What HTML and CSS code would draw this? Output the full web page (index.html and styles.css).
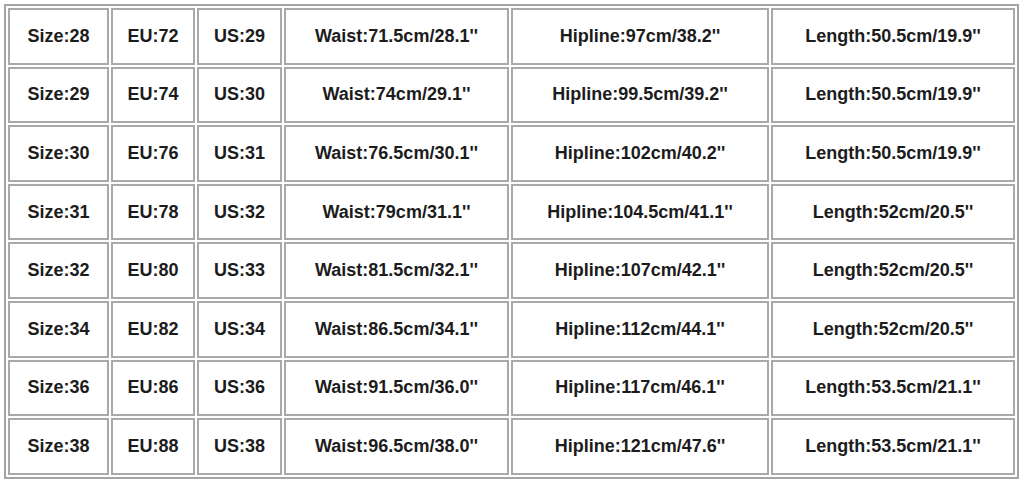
FILE: index.html
```html
<!DOCTYPE html>
<html>
<head>
<meta charset="utf-8">
<link rel="stylesheet" href="styles.css">
</head>
<body>
<table class="size-chart">
<colgroup>
<col class="c1"><col class="c2"><col class="c3"><col class="c4"><col class="c5"><col class="c6">
</colgroup>
<tbody>
<tr><td>Size:28</td><td>EU:72</td><td>US:29</td><td>Waist:71.5cm/28.1''</td><td>Hipline:97cm/38.2''</td><td>Length:50.5cm/19.9''</td></tr>
<tr><td>Size:29</td><td>EU:74</td><td>US:30</td><td>Waist:74cm/29.1''</td><td>Hipline:99.5cm/39.2''</td><td>Length:50.5cm/19.9''</td></tr>
<tr><td>Size:30</td><td>EU:76</td><td>US:31</td><td>Waist:76.5cm/30.1''</td><td>Hipline:102cm/40.2''</td><td>Length:50.5cm/19.9''</td></tr>
<tr><td>Size:31</td><td>EU:78</td><td>US:32</td><td>Waist:79cm/31.1''</td><td>Hipline:104.5cm/41.1''</td><td>Length:52cm/20.5''</td></tr>
<tr><td>Size:32</td><td>EU:80</td><td>US:33</td><td>Waist:81.5cm/32.1''</td><td>Hipline:107cm/42.1''</td><td>Length:52cm/20.5''</td></tr>
<tr><td>Size:34</td><td>EU:82</td><td>US:34</td><td>Waist:86.5cm/34.1''</td><td>Hipline:112cm/44.1''</td><td>Length:52cm/20.5''</td></tr>
<tr><td>Size:36</td><td>EU:86</td><td>US:36</td><td>Waist:91.5cm/36.0''</td><td>Hipline:117cm/46.1''</td><td>Length:53.5cm/21.1''</td></tr>
<tr><td>Size:38</td><td>EU:88</td><td>US:38</td><td>Waist:96.5cm/38.0''</td><td>Hipline:121cm/47.6''</td><td>Length:53.5cm/21.1''</td></tr>
</tbody>
</table>
</body>
</html>
```

FILE: styles.css
```css
html, body {
  margin: 0;
  padding: 0;
  background: #ffffff;
}

body {
  padding: 4px 0 0 4px;
  font-family: "Liberation Sans", Arial, sans-serif;
}

.size-chart {
  table-layout: fixed;
  width: 1015px;
  border: 2px solid #a4a4a4;
  border-spacing: 2px;
  border-collapse: separate;
}

.size-chart td {
  box-sizing: border-box;
  height: 56.6px;
  padding: 0;
  border: 2px solid #a9a9a9;
  text-align: center;
  vertical-align: middle;
  font-size: 18px;
  font-weight: bold;
  color: #1c1c1c;
  white-space: nowrap;
}

.c1 { width: 101px; }
.c2 { width: 84px; }
.c3 { width: 85px; }
.c4 { width: 225px; }
.c5 { width: 258px; }
.c6 { width: 244px; }
```
